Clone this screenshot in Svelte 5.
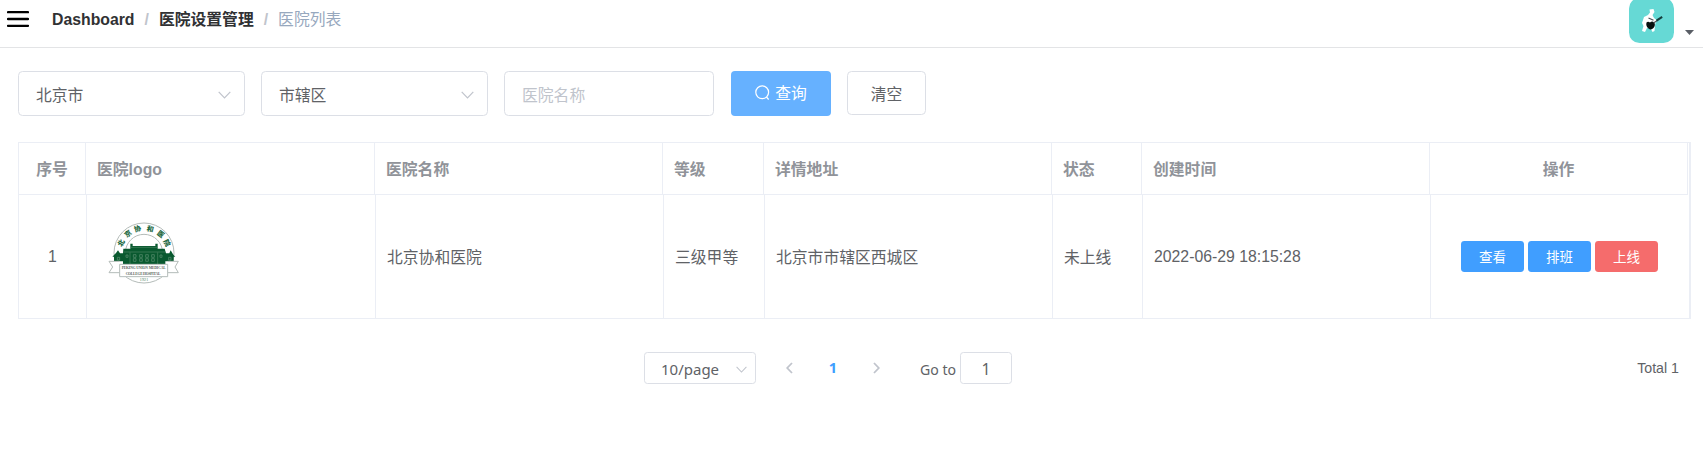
<script>
  const columns = [
    { title: '序号', center: true },
    { title: '医院logo' },
    { title: '医院名称' },
    { title: '等级' },
    { title: '详情地址' },
    { title: '状态' },
    { title: '创建时间' },
    { title: '操作', center: true }
  ];
  const seal = [
    { c: '北', x: 364, y: 336, r: -62 },
    { c: '京', x: 384, y: 308, r: -38 },
    { c: '协', x: 413, y: 294, r: -14 },
    { c: '和', x: 451, y: 294, r: 14 },
    { c: '医', x: 482, y: 310, r: 38 },
    { c: '院', x: 500, y: 336, r: 62 }
  ];
</script>

<div class="page">
  <header class="navbar">
    <svg class="menu" width="22" height="16" viewBox="0 0 22 16"><path d="M1 1.2H21M1 8H21M1 14.8H21" stroke="#000" stroke-width="2.3" stroke-linecap="round" /></svg>
    <nav class="crumbs">
      <b>Dashboard</b><i>/</i><b>医院设置管理</b><i>/</i><span>医院列表</span>
    </nav>
    <div class="user">
      <svg class="avatar" width="45" height="45" viewBox="0 0 45 45">
        <rect width="45" height="45" rx="10.5" fill="#66d9d5" />
        <path d="M20.5 11.5L24.5 11L25.5 14L23.5 17L25 20L27.5 22L26 27L25.5 33L23.5 34L21.5 30L18 30L16 34L13 33L14.5 28L13 25L15 19L19 17L21 14.5Z" fill="#fff" />
        <path d="M17.5 24.5Q19 23 21 24.5Q23 22.5 25 24.3Q27 27 24.5 30Q22 32.5 19.5 30.5Q16.5 28 17.5 24.5Z" fill="#07100f" />
        <path d="M19.5 20L24.5 22.3M24.5 25L29 22" stroke="#4b5257" stroke-width="1.2" />
        <path d="M27.5 22.7L33.2 18.8" stroke="#163e3d" stroke-width="2" />
      </svg>
      <svg class="caret" width="9" height="5" viewBox="0 0 9 5"><path d="M0 0H9L4.5 5Z" fill="#5a5e66" /></svg>
    </div>
  </header>

  <main>
    <div class="filters">
      <div class="field select"><span>北京市</span><svg width="13" height="8" viewBox="0 0 13 8"><path d="M.7.9L6.5 7L12.3.9" /></svg></div>
      <div class="field select second"><span>市辖区</span><svg width="13" height="8" viewBox="0 0 13 8"><path d="M.7.9L6.5 7L12.3.9" /></svg></div>
      <div class="field name"><span>医院名称</span></div>
      <button class="search">
        <svg width="15" height="16" viewBox="0 0 15 16"><circle cx="7.2" cy="7.3" r="6.4" /><path d="M11.4 12L13.7 14.5" /></svg><span>查询</span>
      </button>
      <button class="clear">清空</button>
    </div>

    <section class="table">
      <div class="row head">
        {#each columns as col}
          <div class="cell" class:center={col.center}>{col.title}</div>
        {/each}
      </div>
      <div class="row body">
        <div class="cell center">1</div>
        <div class="cell logo">
          <svg width="76" height="68" viewBox="318 264 228 204">
            <circle cx="432" cy="366" r="90" fill="#fff" stroke="#b4bcb9" stroke-width="3" />
            <path d="M376 366A56 56 0 0 1 488 366" fill="none" stroke="#b4bcb9" stroke-width="3" />
            {#each seal as s}
              <text class="glyph" text-anchor="middle" transform="translate({s.x} {s.y}) rotate({s.r})" dy="7">{s.c}</text>
            {/each}
            <path d="M391 338H398V345H466V338H473V353H494L498 367H508L512 358L520 371L526 377H521V391H496V400H369V391H342V377H337L348 366L354 358L360 367H369L370 353H391Z" fill="#09592f" />
            <path d="M391 349H473M370 363H496M390 364V399M473 364V399" stroke="#4c8664" stroke-width="2" />
            <g fill="none" stroke="#5d9273" stroke-width="2">
              <path d="M400 371H408V379H400ZM400 383H408V391H400ZM419 371H427V379H419ZM419 383H427V391H419ZM437 371H445V379H437ZM437 383H445V391H437ZM455 371H463V379H455ZM455 383H463V391H455Z" />
              <path d="M352 379H359V387H352ZM506 379H513V387H506ZM378 372H384V379H378ZM480 372H486V379H480Z" />
            </g>
            <path d="M359 391H327L338 408L327 425H359M503 391H535L525 408L535 425H503" fill="#fff" stroke="#b4bcb9" stroke-width="3" />
            <path d="M359 400H503V437H359Z" fill="#fff" stroke="#b4bcb9" stroke-width="3" />
            <text class="latin" x="431" y="415" text-anchor="middle" textLength="132">PEKING UNION MEDICAL</text>
            <text class="latin" x="429" y="432" text-anchor="middle" textLength="104">COLLEGE HOSPITAL</text>
            <text class="year" x="432" y="450" text-anchor="middle" textLength="26">1921</text>
          </svg>
        </div>
        <div class="cell">北京协和医院</div>
        <div class="cell">三级甲等</div>
        <div class="cell">北京市市辖区西城区</div>
        <div class="cell">未上线</div>
        <div class="cell">2022-06-29 18:15:28</div>
        <div class="cell actions">
          <button>查看</button><button>排班</button><button class="danger">上线</button>
        </div>
      </div>
    </section>

    <footer class="pager">
      <div class="size"><span>10/page</span><svg width="11" height="7" viewBox="0 0 13 8"><path d="M.7.9L6.5 7L12.3.9" /></svg></div>
      <svg class="arrow prev" width="7" height="12" viewBox="0 0 7 12"><path d="M6 1L1.2 6L6 11" /></svg>
      <b class="current">1</b>
      <svg class="arrow next" width="7" height="12" viewBox="0 0 7 12"><path d="M1 1L5.8 6L1 11" /></svg>
      <span class="goto">Go to</span>
      <div class="jump">1</div>
      <span class="total">Total 1</span>
    </footer>
  </main>
</div>

<style>
  :global(body) { background: #fff; }
  .page, .page * { box-sizing: border-box; }
  .page {
    width: 1703px; height: 457px; overflow: hidden; background: #fff;
    font: 15.8px "Liberation Sans", "Noto Sans CJK SC", sans-serif; color: #606266;
  }
  .navbar { display: flex; height: 48px; border-bottom: 1px solid #e3e4e6; padding-left: 7px; }
  .menu { margin-top: 11px; fill: none; }
  .crumbs { display: flex; margin-left: 23px; height: 40px; line-height: 40px; white-space: nowrap; }
  .crumbs b { color: #303133; }
  .crumbs i { font-style: normal; font-weight: 700; color: #c0c4cc; margin: 0 10px; }
  .crumbs span { color: #97a8be; }
  .user { display: flex; margin-left: auto; padding-right: 9px; }
  .avatar { margin-top: -2px; }
  .caret { margin: 30px 0 0 11px; }
  main { padding: 23px 12px 0 18px; }
  .filters { display: flex; align-items: flex-start; height: 45px; }
  .field { display: flex; align-items: center; height: 45px; border: 1px solid #dcdfe6; border-radius: 4.5px; padding: 2px 13px 0 17px; }
  .field span { padding-bottom: 1px; }
  .select { width: 227px; justify-content: space-between; }
  .second { margin-left: 16px; }
  .name { width: 210px; margin-left: 16px; color: #c0c4cc; padding-left: 17px; }
  .select svg, .size svg { fill: none; stroke: #c0c4cc; stroke-width: 1.2; }
  button { font: inherit; border: 0; padding: 0; display: flex; align-items: center; justify-content: center; white-space: nowrap; }
  .search { width: 100px; height: 45px; margin-left: 17px; border-radius: 4px; background: #66b1ff; color: #fff; gap: 5px; padding-bottom: 1px; }
  .search span { padding-bottom: 2px; }
  .search svg { fill: none; stroke: #fff; stroke-width: 1.2; }
  .clear { width: 79px; height: 44px; margin-left: 16px; border: 1px solid #dcdfe6; border-radius: 4.5px; background: #fff; color: #606266; }
  .table { margin-top: 26px; width: 1673px; height: 177px; border: 1px solid #ebeef5; border-right-width: 2px; }
  .row { display: grid; }
  .head { grid-template-columns: 67px 289px 288px 101px 288px 90px 288px 258px; height: 52px; width: 1669px; font-weight: 700; color: #909399; }
  .body { grid-template-columns: 68px 289px 288px 101px 288px 90px 288px 258px; height: 123px; }
  .cell { display: flex; align-items: center; padding-left: 11px; border-right: 1px solid #ebeef5; white-space: nowrap; }
  .head .cell { border-bottom: 1px solid #ebeef5; padding-bottom: 1px; }
  .center { justify-content: center; padding-left: 0; }
  .logo { padding: 0 0 7px 19px; }
  .glyph { font: 900 21px "Noto Sans CJK SC", sans-serif; fill: #1d693f; }
  .latin { font: 700 11px "Liberation Serif", serif; fill: #59645e; }
  .year { font: 12px "Liberation Serif", serif; fill: #3c7b58; }
  .actions { padding-left: 30px; gap: 4px; border-right: 0; }
  .actions button { width: 63px; height: 31px; border-radius: 3.4px; background: #409eff; color: #fff; font-size: 13.5px; padding-bottom: 2px; }
  .actions .danger { background: #f56c6c; }
  .pager { display: flex; align-items: center; margin-top: 33px; padding-left: 626px; height: 32px; }
  .size { display: flex; align-items: center; justify-content: space-between; width: 112px; height: 32px; border: 1px solid #dcdfe6; border-radius: 3.4px; padding: 2px 8px 0 16px; font: 15px "Noto Sans", sans-serif; }
  .arrow { fill: none; stroke: #c0c4cc; stroke-width: 1.8; }
  .prev { margin-left: 30px; }
  .current { width: 10px; margin-left: 35px; text-align: center; color: #409eff; font: 700 14.6px "Noto Sans", sans-serif; padding-bottom: 2px; }
  .next { margin-left: 35px; }
  .goto { width: 36px; margin-left: 40px; font: 14.1px "Noto Sans", sans-serif; padding-top: 2px; white-space: nowrap; }
  .jump { width: 52px; height: 32px; margin-left: 4px; border: 1px solid #dcdfe6; border-radius: 3.4px; text-align: center; line-height: 32px; font-family: "Noto Sans", sans-serif; }
  .total { margin: 0 12px 0 auto; font-size: 14.2px; padding-bottom: 1px; }
</style>
